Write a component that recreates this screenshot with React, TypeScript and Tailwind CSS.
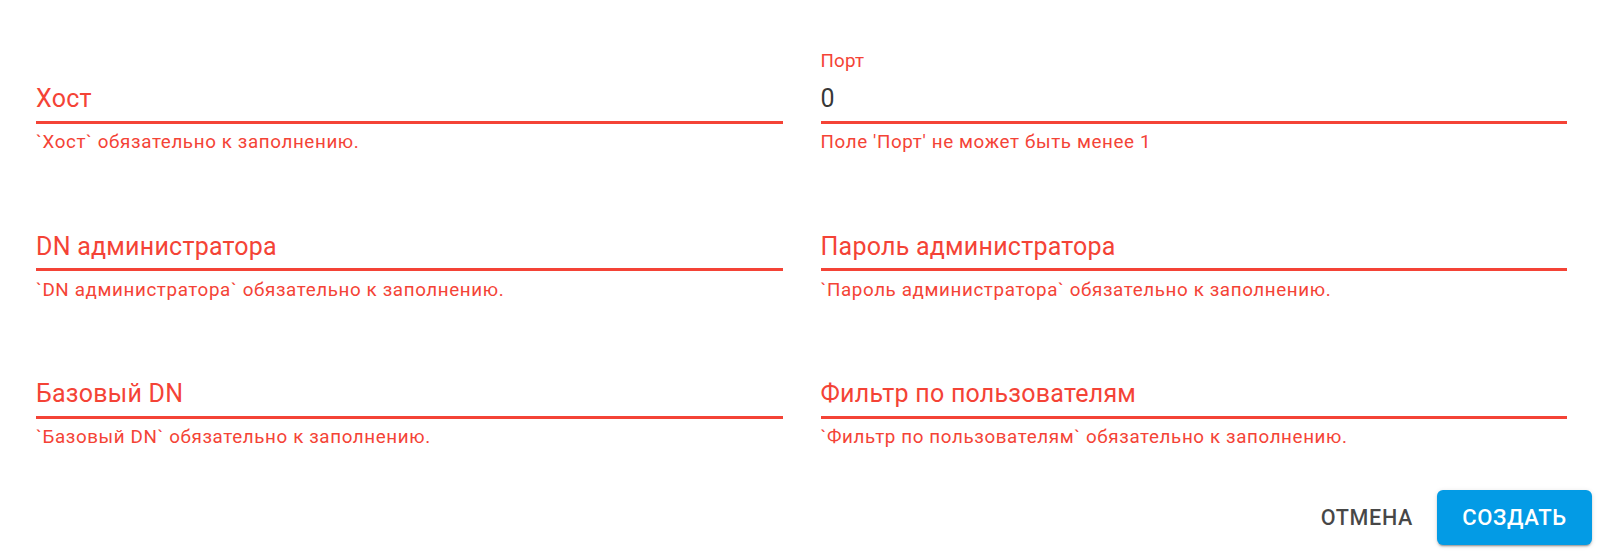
import React from "react";

type Field = { label: string; value?: string; helper: string };

const fields: Field[] = [
  { label: "Хост", helper: "`Хост` обязательно к заполнению." },
  { label: "Порт", value: "0", helper: "Поле 'Порт' не может быть менее 1" },
  { label: "DN администратора", helper: "`DN администратора` обязательно к заполнению." },
  { label: "Пароль администратора", helper: "`Пароль администратора` обязательно к заполнению." },
  { label: "Базовый DN", helper: "`Базовый DN` обязательно к заполнению." },
  { label: "Фильтр по пользователям", helper: "`Фильтр по пользователям` обязательно к заполнению." },
];

function TextField({ f }: { f: Field }) {
  const shrunk = f.value !== undefined;
  return (
    <div className="flex flex-col">
      <div className="h-[32px]">
        {shrunk && (
          <div className="text-[18.8px] leading-[20px] text-[#f44336] tracking-[0.00938em]">{f.label}</div>
        )}
      </div>
      <div className="h-[37.7px] pb-[5.7px]">
        {shrunk ? (
          <div className="text-[25px] leading-[32px] text-[rgba(0,0,0,0.8)] tracking-[0.00938em]">{f.value}</div>
        ) : (
          <div className="text-[25px] leading-[32px] text-[#f44336] tracking-[0.00938em]">{f.label}</div>
        )}
      </div>
      <div className="h-[2.8px] bg-[#f44336]" />
      <div className="mt-[8.5px] text-[18.8px] leading-[20px] text-[#f44336] tracking-[0.033em]">{f.helper}</div>
    </div>
  );
}

export default function App() {
  return (
    <div
      className="w-[1600px] h-[557px] bg-white flex flex-col"
      style={{ fontFamily: "Roboto, 'Noto Sans', sans-serif" }}
    >
      <div className="pt-[51.3px] pl-[36px] pr-[33px] grid grid-cols-2 gap-x-[38px] gap-y-[46.5px]">
        {fields.map((f) => (
          <TextField key={f.label} f={f} />
        ))}
      </div>
      <div className="mt-[43px] pr-[8px] flex justify-end items-center">
        <button className="h-[55px] px-[22px] text-[21.6px] font-medium uppercase tracking-[0.02857em] text-[rgba(0,0,0,0.72)] rounded-[6px]">
          Отмена
        </button>
        <button className="ml-[2px] h-[55px] w-[155px] rounded-[6px] bg-[#039be5] text-white text-[22px] font-medium uppercase tracking-[0.02857em] shadow-[0px_3px_1px_-2px_rgba(0,0,0,0.2),0px_2px_2px_0px_rgba(0,0,0,0.14),0px_1px_5px_0px_rgba(0,0,0,0.12)]">
          Создать
        </button>
      </div>
    </div>
  );
}
